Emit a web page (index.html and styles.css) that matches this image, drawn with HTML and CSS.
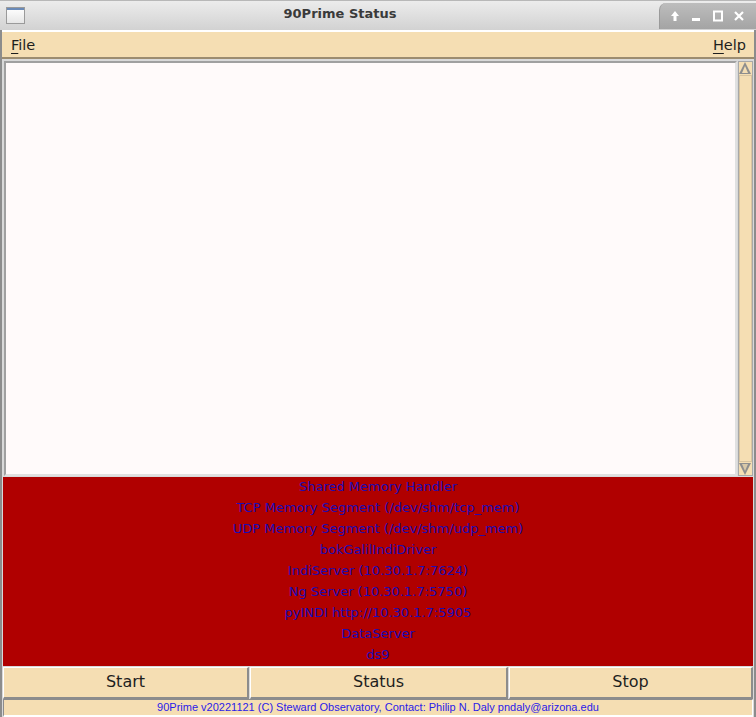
FILE: index.html
```html
<!DOCTYPE html>
<html>
<head>
<meta charset="utf-8">
<link rel="stylesheet" href="styles.css">
</head>
<body>
<div class="window">
  <div class="titlebar">
    <div class="winicon"><div class="winicon-bar"></div></div>
    <div class="title">90Prime Status</div>
    <div class="wbtns">
      <svg width="14" height="14" viewBox="0 0 14 14"><path d="M7 2 L11 7 H8.5 V12 H5.5 V7 H3 Z" fill="#fff"/></svg>
      <svg width="14" height="14" viewBox="0 0 14 14"><rect x="3" y="9" width="8" height="3" fill="#fff"/></svg>
      <svg width="14" height="14" viewBox="0 0 14 14"><rect x="3" y="2.5" width="8" height="9" fill="none" stroke="#fff" stroke-width="2"/></svg>
      <svg width="14" height="14" viewBox="0 0 14 14"><path d="M3 3 L11 11 M11 3 L3 11" stroke="#fff" stroke-width="2.2"/></svg>
    </div>
  </div>
  <div class="frame">
    <div class="menubar">
      <span class="menu"><u>F</u>ile</span>
      <span class="menu"><u>H</u>elp</span>
    </div>
    <div class="textrow">
      <div class="textarea"></div>
      <div class="scrollbar">
        <div class="arrow up"></div>
        <div class="trough"></div>
        <div class="arrow down"></div>
      </div>
    </div>
    <div class="status">
      <div class="lines">
        <div>Shared Memory Handler</div>
        <div>TCP Memory Segment (/dev/shm/tcp_mem)</div>
        <div>UDP Memory Segment (/dev/shm/udp_mem)</div>
        <div>bokGalilIndiDriver</div>
        <div>IndiServer (10.30.1.7:7624)</div>
        <div>Ng Server (10.30.1.7:5750)</div>
        <div>pyINDI http://10.30.1.7:5905</div>
        <div>DataServer</div>
        <div>ds9</div>
      </div>
    </div>
    <div class="buttons">
      <div class="btn b1">Start</div>
      <div class="btn b2">Status</div>
      <div class="btn b3">Stop</div>
    </div>
    <div class="footer">90Prime v20221121 (C) Steward Observatory, Contact: Philip N. Daly pndaly@arizona.edu</div>
  </div>
</div>
</body>
</html>
```
FILE: styles.css
```css
* { box-sizing: border-box; }
html, body { margin: 0; padding: 0; }
body { width: 756px; height: 717px; background: #d9d9d9; overflow: hidden; font-family: "DejaVu Sans", sans-serif; }
.window { width: 756px; height: 717px; display: flex; flex-direction: column; }
.titlebar {
  height: 30px; flex: none; display: flex; align-items: center; position: relative;
  background: linear-gradient(#ececec, #d2d2d2);
  border-top: 1px solid #b8b8b8;
}
.winicon {
  width: 19px; height: 17px; margin-left: 6px;
  border: 1px solid #9a9a9a; background: linear-gradient(#ffffff, #e6e6e6);
}
.winicon-bar { height: 2px; background: #6a8ab8; }
.title {
  position: absolute; left: 0; right: 0; top: 5px; text-align: center;
  font-family: "DejaVu Sans", sans-serif; font-weight: bold; font-size: 13px; color: #3a3a3a;
  padding-right: 76px;
}
.wbtns {
  position: absolute; right: 0; top: 2px; height: 26px; width: 97px;
  background: linear-gradient(#bdbdbd, #a4a4a4);
  border-top-left-radius: 7px; border-left: 1px solid #9a9a9a;
  display: flex; align-items: center; justify-content: space-around; padding: 0 6px 0 4px;
}
.frame {
  flex: 1; display: flex; flex-direction: column;
  border-left: 2px solid #8c8c8c; border-right: 2px solid #8c8c8c; border-bottom: 2px solid #8c8c8c;
  background: #d9d9d9;
  padding: 0 1px 1px 1px;
}
.menubar {
  height: 29px; flex: none; background: #f5deb3;
  border-top: 2px solid #ffffff; border-bottom: 2px solid #9c8c70;
  display: flex; justify-content: space-between; align-items: center;
  padding: 0 8px 0 9px; margin: 0 -1px;
}
.menu { font-size: 14.5px; color: #1e1e1e; }
.menu u { text-decoration-thickness: 1px; text-underline-offset: 3px; }
.textrow { height: 415px; flex: none; display: flex; margin-top: 2px; padding-left: 1px; }
.textarea {
  flex: 1; background: #fffafa;
  border-top: 2px solid #a0a0a0; border-left: 2px solid #a0a0a0;
  border-right: 2px solid #e0e0e0; border-bottom: 2px solid #e0e0e0;
}
.scrollbar {
  width: 15px; flex: none; margin-left: 1px; display: flex; flex-direction: column;
  background: #f5deb3; border: 1px solid #a8a8a8;
}
.arrow { height: 13px; flex: none; position: relative; }
.arrow.up::before {
  content: ""; position: absolute; left: 0px; top: 0px;
  border-left: 6.5px solid transparent; border-right: 6.5px solid transparent; border-bottom: 12px solid #8e8e8e;
}
.arrow.up::after {
  content: ""; position: absolute; left: 3px; top: 4px;
  border-left: 3.5px solid transparent; border-right: 3.5px solid transparent; border-bottom: 7px solid #f5deb3;
}
.arrow.down::before {
  content: ""; position: absolute; left: 0px; top: 1px;
  border-left: 6.5px solid transparent; border-right: 6.5px solid transparent; border-top: 12px solid #8e8e8e;
}
.arrow.down::after {
  content: ""; position: absolute; left: 3px; top: 2px;
  border-left: 3.5px solid transparent; border-right: 3.5px solid transparent; border-top: 7px solid #d8c8a8;
}
.trough { flex: 1; border: 1px solid #d8c4a0; background: #f5deb3; }
.status {
  height: 189px; flex: none; background: #b00000; margin-top: 1px;
  display: flex; flex-direction: column; align-items: center;
  font-size: 13px; line-height: 21px; color: #1c0cb4;
}
.lines { margin-top: -1px; display: flex; flex-direction: column; align-items: center; }
.buttons { height: 32px; flex: none; display: flex; gap: 1px; margin-top: 1px; }
.btn {
  background: #f5deb3; font-size: 16px; color: #1e1e1e;
  display: flex; align-items: center; justify-content: center; padding-bottom: 3px;
  border-top: 1px solid #ffffff; border-left: 1px solid #ffffff;
  border-right: 2px solid #8c8c8c; border-bottom: 2px solid #8c8c8c;
}
.b1 { width: 246px; }
.b2 { width: 258px; }
.b3 { flex: 1; }
.footer {
  height: 18px; flex: none; background: #f5deb3; text-align: center;
  font-family: "Liberation Sans", Arial, sans-serif; font-size: 11px; line-height: 15px;
  color: #2a20e8;
  border-top: 1px solid #8c8c8c; border-left: 1px solid #8c8c8c;
  border-right: 1px solid #ffffff; border-bottom: 2px solid #ffffff;
}
```
